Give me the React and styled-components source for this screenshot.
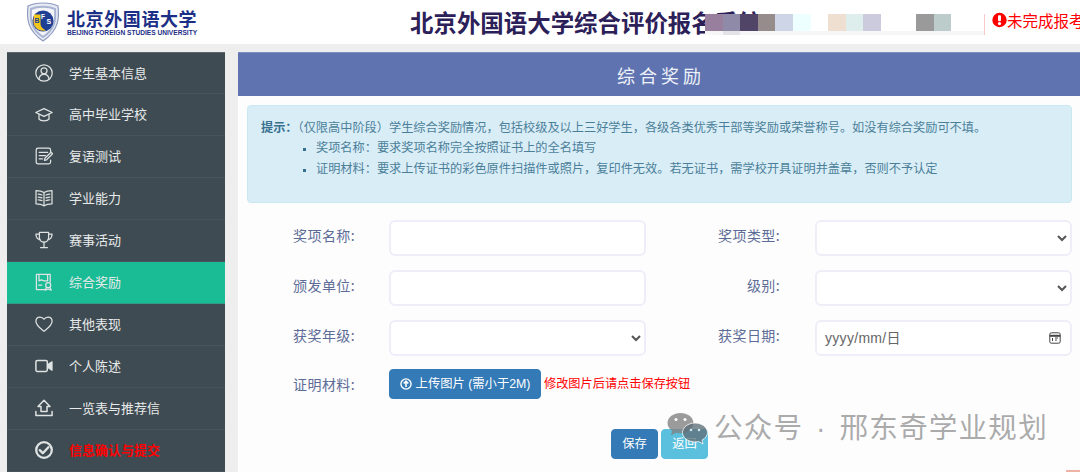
import React from 'react';
import styled, { createGlobalStyle } from 'styled-components';

const Global = createGlobalStyle`
  html, body { margin: 0; padding: 0; background: #eee; }
  body { width: 1080px; height: 472px; overflow: hidden; font-family: "Liberation Sans", "Noto Sans CJK SC", sans-serif; }
  * { box-sizing: border-box; }
`;

const Shell = styled.div`
  width: 1080px; height: 472px; position: relative; overflow: hidden;
  display: flex; flex-direction: column; background: #eee;
`;
const Header = styled.header`
  height: 44px; background: #fff; display: flex; align-items: center; position: relative; flex: none;
`;
const Brand = styled.div`
  width: 410px; padding-left: 26px; display: flex; align-items: center; gap: 7px; flex: none;
`;
const BrandText = styled.div`
  display: flex; flex-direction: column; color: #1c2f86; width: 132px;
`;
const BrandCn = styled.div`
  font: 700 18px/20px "Noto Sans CJK SC", sans-serif; white-space: nowrap; letter-spacing: .6px;
`;
const BrandEn = styled.div`
  font: 700 6.6px/8px "Liberation Sans", sans-serif; white-space: nowrap; margin-top: 1px;
`;
const Title = styled.h1`
  margin: 0; font: 700 23.45px/44px "Noto Sans CJK SC", sans-serif; color: #2c2059; white-space: nowrap;
`;
const Status = styled.div`
  position: absolute; top: 11px; left: 992px; display: flex; align-items: center;
  color: #f00; font: 400 15.5px/18px "Noto Sans CJK SC", sans-serif; white-space: nowrap;
`;
const Mosaic = styled.div`
  position: absolute; left: 705px; top: 14px; width: 280px; height: 21px; background: #f6f6f6;
  border-right: 1px solid #f6c8c8;
`;
const MosaicRow = styled.div`
  display: flex; height: 17px; background: #fff;
`;
const MosaicTail = styled.div`
  margin-left: 17.6px; width: 17.6px; height: 4px; background: #e4e4e8;
`;
const Cell = styled.div`
  width: 17.6px; flex: none; background: ${p => p.$c};
`;
const Page = styled.div`
  flex: 1; display: flex; gap: 13px; padding: 8px 0 0 7px; min-height: 0;
`;
const Sidebar = styled.nav`
  width: 218px; flex: none; background: #3e4b52; border-top: 1px solid #5c666c;
`;
const Item = styled.div`
  height: 42px; display: flex; align-items: center; gap: 16px; padding: 0 0 1px 28px;
  background: ${p => (p.$active ? '#1abc96' : 'transparent')};
  border-bottom: 1px solid ${p => (p.$active ? '#2e9c86' : '#47545b')};
  color: #e8eaea; font: 400 13px/18px "Noto Sans CJK SC", sans-serif;
  &:first-child { height: 41px; }
`;
const ItemLabel = styled.span`
  color: ${p => (p.$alert ? '#f00' : 'inherit')};
  font-weight: ${p => (p.$alert ? 700 : 400)};
`;
const Main = styled.main`
  flex: 1; background: #fdfdfe; display: flex; flex-direction: column; min-width: 0;
`;
const PanelHead = styled.div`
  height: 44px; flex: none; background: #5e73b0; color: #eef1f8; display: flex; align-items: center; justify-content: center;
  font: 400 18px/24px "Noto Sans CJK SC", sans-serif; letter-spacing: 4px; padding-left: 4px; border-top: 1px solid #7a8cc0;
`;
const Notice = styled.section`
  margin: 9px 8px 0 9px; height: 98px; padding: 12px 13px 0; background: #d9edf7; border: 1px solid #c9e9f2; border-radius: 4px;
  color: #4b7f99; font: 400 12.2px/18px "Noto Sans CJK SC", sans-serif;
`;
const NoticeLead = styled.div` white-space: nowrap; `;
const NoticeStrong = styled.b` color: #37708f; `;
const NoticeList = styled.ul`
  margin: 2px 0 0; padding: 0 0 0 55px; list-style: square;
`;
const NoticeItem = styled.li`
  white-space: nowrap; margin-bottom: 3px;
  &::marker { font-size: 9px; color: #37708f; }
`;
const Form = styled.form`
  padding-top: 17px; display: grid; grid-template-columns: 151px 257px 169px 257px; grid-auto-rows: 36px; row-gap: 14px; align-items: center;
`;
const Label = styled.label`
  text-align: right; padding-right: ${p => p.$pad || 34}px; color: #5d6c96; font: 400 14px/20px "Noto Sans CJK SC", sans-serif;
  letter-spacing: .4px; margin-top: -6px; white-space: nowrap;
`;
const Field = styled.input`
  height: 36px; width: 257px; border: 2px solid #eeeef8; border-radius: 6px; background: #fff; outline: none;
`;
const Select = styled.select`
  height: 36px; width: 257px; border: 2px solid #eeeef8; border-radius: 6px; background: #fff; outline: none; color: #555;
`;
const DateField = styled.div`
  height: 36px; width: 257px; border: 2px solid #eeeef8; border-radius: 6px; background: #fff;
  display: flex; align-items: center; justify-content: space-between; padding: 0 9px 0 8px;
  font: 400 14px/20px "Liberation Sans", "Noto Sans CJK SC", sans-serif; letter-spacing: .3px; color: #666;
`;
const UploadCell = styled.div`
  grid-column: 2 / 5; display: flex; align-items: center; gap: 3px; height: 30px; align-self: start; margin-top: -1px;
`;
const UploadLabel = styled(Label)`
  margin-top: -8px;
`;
const Btn = styled.button`
  border: 1px solid ${p => p.$bg}; background: ${p => p.$bg}; color: #fff; border-radius: 4px; padding: 0;
  font: 400 12.3px/18px "Liberation Sans", "Noto Sans CJK SC", sans-serif; height: 30px; width: ${p => p.$w}px;
  display: inline-flex; align-items: center; justify-content: center; gap: 4px; flex: none;
`;
const Hint = styled.span`
  color: #f00; font: 400 12.2px/18px "Noto Sans CJK SC", sans-serif; white-space: nowrap; margin-top: -2px;
`;
const Actions = styled.div`
  display: flex; gap: 3px; padding-left: 373px; margin-top: 23px;
`;
const Mark = styled.div`
  position: absolute; left: 667px; top: 408px; display: flex; align-items: flex-start; gap: 6px;
  color: rgba(140,140,140,.72); font: 400 28.6px/40px "Liberation Sans", "Noto Sans CJK SC", sans-serif;
  letter-spacing: 1.2px; word-spacing: 3.5px; white-space: nowrap;
`;
const MarkIcon = styled.svg`
  width: 41px; height: 35px; margin-top: 3px; flex: none;
`;
const Corner = styled.div`
  position: absolute; right: 0; bottom: 0; width: 14px; height: 2px; background: #efb3a6;
`;
const Glyph = styled.svg`
  width: 18px; height: 18px; flex: none; fill: none; stroke: #dfe3e3; stroke-width: 1.25; stroke-linecap: round; stroke-linejoin: round;
`;

const icons = {
  user: <><circle cx="9" cy="9" r="8.2" /><circle cx="9" cy="6.8" r="3" /><path d="M3.9 15.2C4.4 12 6.6 10.4 9 10.4s4.6 1.6 5.1 4.8" /></>,
  cap: <><path d="M.8 7.5 9 3.6l8.2 3.9L9 11.4z" /><path d="M4 9.2v5c1.6 2.2 8.4 2.2 10 0v-5" /></>,
  note: <><path d="M15.6 5V3a1.8 1.8 0 0 0-1.8-1.8H3A1.8 1.8 0 0 0 1.2 3v12A1.8 1.8 0 0 0 3 16.8h10.8a1.8 1.8 0 0 0 1.8-1.8v-2" /><path d="M4.2 5.4h8.4M4.2 8.6h6.4M4.2 11.8h3.4" /><path d="M9.4 13.4l.5-2.2L16 5.2l1.6 1.6-6 6z" /></>,
  book: <><path d="M9 3.6C7 2.2 3.8 1.6 1 1.6v13.2c2.8 0 6 .6 8 2 2-1.4 5.2-2 8-2V1.6c-2.8 0-6 .6-8 2z" /><path d="M9 3.6v13.2M3.2 5.2c1.2 0 2.6.3 3.8.8M3.2 8c1.2 0 2.6.3 3.8.8M3.2 10.8c1.2 0 2.6.3 3.8.8M14.8 5.2c-1.2 0-2.6.3-3.8.8M14.8 8c-1.2 0-2.6.3-3.8.8M14.8 10.8c-1.2 0-2.6.3-3.8.8" /></>,
  trophy: <><path d="M4.4 1.4h9.2v4.8c0 3-2 5-4.6 5s-4.6-2-4.6-5z" /><path d="M4.4 3H.9c0 3.2 1.2 5 4.2 5.8M13.6 3h3.5c0 3.2-1.2 5-4.2 5.8" /><path d="M9 11.2v5M5.6 16.6h6.8" /></>,
  cert: <><path d="M9.6 16.6H1.4V1.4h13.8v7.6" /><path d="M4 1.6v6.2l2.4-1 2.4 1 3.8.1V1.6M3.6 12h3.2" /><circle cx="13.2" cy="12.2" r="2.5" /><path d="M11.4 14.2l-1.2 3 3-1.2 3 1.2-1.2-3" /></>,
  heart: <path d="M9 16.2C5.4 13.4.9 10.4.9 6.2 .9 3.6 2.8 2 5 2c1.7 0 3.1.8 4 2.3C9.9 2.8 11.3 2 13 2c2.2 0 4.1 1.6 4.1 4.2 0 4.2-4.5 7.2-8.1 10z" />,
  video: <><rect x=".9" y="3.4" width="11.4" height="11" rx="1.4" strokeWidth="1.5" /><path d="M13 7.6l4-2.8v8.4l-4-2.8z" fill="#dfe3e3" /></>,
  upload: <><path d="M9 1.2l6 6.2h-3v5H6v-5H3z" strokeWidth="1.5" /><path d="M.9 12.6v3.8h16.2v-3.8" strokeWidth="1.5" /></>,
  check: <><circle cx="9" cy="9" r="7.8" strokeWidth="2.3" /><path d="M4.8 9.2l3 3 5.6-6" strokeWidth="2.4" /></>,
};

const C = '\uFF1A';
const L = '\uFF08';
const R = '\uFF09';
const K = '\uFF0C';

const nav = [
  ['user', '学生基本信息'], ['cap', '高中毕业学校'], ['note', '复语测试'], ['book', '学业能力'], ['trophy', '赛事活动'],
  ['cert', '综合奖励', true], ['heart', '其他表现'], ['video', '个人陈述'], ['upload', '一览表与推荐信'], ['check', '信息确认与提交', false, true],
];
const cells = ['#977f9d', '#8f8aa8', '#504467', '#968c8c', '#cdd5e6', '#edffff', '#fff', '#eedfd0', '#deeeed', '#cccbde', '#fff', '#fff', '#9a9a9a', '#bccccb'];

const lead = `${L}仅限高中阶段${R}学生综合奖励情况${K}包括校级及以上三好学生${K}各级各类优秀干部等奖励或荣誉称号。如没有综合奖励可不填。`;
const ruleName = `奖项名称${C}要求奖项名称完全按照证书上的全名填写`;
const ruleProof = `证明材料${C}要求上传证书的彩色原件扫描件或照片${K}复印件无效。若无证书${K}需学校开具证明并盖章${K}否则不予认定`;

const Crest = () => (
  <svg width="34" height="40" viewBox="0 0 34 40">
    <path d="M2 4C10 0 24 0 32 4c1.4 12 1 24-15 35C1 28 .6 16 2 4z" fill="#e6eaf4" stroke="#8f9cc0" strokeWidth="1.2" />
    <path d="M5 7c7-3 17-3 24 0 .8 10 .4 20-12 28C4.6 27 4.2 17 5 7z" fill="#f4f5fa" stroke="#a9b4d2" strokeWidth="2" />
    <circle cx="17" cy="19" r="10.5" fill="#1e3f94" />
    <path d="M8 12.5h6.5V22c0 3 2.5 5 5.5 6.5-5.5 1.2-12.5-2-12.5-9z" fill="#f3c61d" />
    <text x="8.6" y="21" fontSize="7" fontWeight="700" fill="#1e3f94" fontFamily="Liberation Sans">B</text>
    <text x="15" y="17" fontSize="6.5" fontWeight="700" fill="#fff" fontFamily="Liberation Sans">F</text>
    <text x="20.5" y="22" fontSize="7" fontWeight="700" fill="#fff" fontFamily="Liberation Sans">S</text>
  </svg>
);

const WeChat = () => (
  <MarkIcon viewBox="0 0 41 35">
    <path d="M13.5 2C6.5 2 .5 6.2.5 12c0 3.4 2 6 4.6 7.900L4 24.200l5-2.500c1.400.4 2.900.6 4.500.6 7 0 13-4.500 13-10.300S20.500 2 13.500 2z" fill="rgba(130,130,130,.8)" />
    <path d="M28 12c-6.900 0-12.500 4.300-12.500 9.500S21.100 31 28 31c1.300 0 2.600-.2 3.800-.5l4.200 2.500-1-3.900c3.300-1.800 5.500-4.500 5.500-7.600C40.500 16.300 34.900 12 28 12z" fill="rgba(95,110,120,.78)" stroke="rgba(255,255,255,.75)" strokeWidth="1" />
    <circle cx="9" cy="8.500" r="1.500" fill="#fff" /><circle cx="18" cy="8.500" r="1.500" fill="#fff" />
    <circle cx="24" cy="19" r="1.300" fill="#cfe6ee" /><circle cx="32" cy="19" r="1.300" fill="#cfe6ee" />
  </MarkIcon>
);

const CalendarIcon = () => (
  <svg width="12" height="12" viewBox="0 0 12 12" fill="none" stroke="#444" strokeWidth="1">
    <rect x=".8" y=".8" width="10.4" height="10.4" rx="1.5" />
    <path d="M.8 3.8h10.4" strokeWidth="2" />
    <path d="M3.5 6v3M6 6h3M6 8h2" />
  </svg>
);

const UploadIcon = () => (
  <svg width="12" height="12" viewBox="0 0 13 13" fill="none" stroke="#fff">
    <circle cx="6.5" cy="6.5" r="5.5" strokeWidth="1.5" />
    <path d="M6.5 9.8V4M4 6l2.5-2.5L9 6" strokeWidth="1.7" />
  </svg>
);

const AlertIcon = () => (
  <svg width="15" height="16" viewBox="0 0 15 16">
    <circle cx="7.5" cy="8" r="7.2" fill="#f00" />
    <rect x="6" y="3.2" width="3" height="6" rx="1" fill="#fff" />
    <circle cx="7.5" cy="11.6" r="1.6" fill="#fff" />
  </svg>
);

export default function App() {
  return (
    <Shell>
      <Global />
      <Header>
        <Brand>
          <Crest />
          <BrandText>
            <BrandCn>北京外国语大学</BrandCn>
            <BrandEn>BEIJING FOREIGN STUDIES UNIVERSITY</BrandEn>
          </BrandText>
        </Brand>
        <Title>北京外国语大学综合评价报名系统</Title>
        <Mosaic>
          <MosaicRow>{cells.map((c, i) => <Cell key={i} $c={c} />)}</MosaicRow>
          <MosaicTail />
        </Mosaic>
        <Status><AlertIcon />未完成报考</Status>
      </Header>
      <Page>
        <Sidebar>
          {nav.map(([icon, text, active, alert]) => (
            <Item key={text} $active={active}>
              <Glyph viewBox="0 0 18 18">{icons[icon]}</Glyph>
              <ItemLabel $alert={alert}>{text}</ItemLabel>
            </Item>
          ))}
        </Sidebar>
        <Main>
          <PanelHead>综合奖励</PanelHead>
          <Notice>
            <NoticeLead><NoticeStrong>{`提示${C}`}</NoticeStrong>{lead}</NoticeLead>
            <NoticeList>
              <NoticeItem>{ruleName}</NoticeItem>
              <NoticeItem>{ruleProof}</NoticeItem>
            </NoticeList>
          </Notice>
          <Form>
            <Label>奖项名称:</Label>
            <Field />
            <Label $pad={35}>奖项类型:</Label>
            <Select><option /></Select>
            <Label>颁发单位:</Label>
            <Field />
            <Label $pad={35}>级别:</Label>
            <Select><option /></Select>
            <Label>获奖年级:</Label>
            <Select><option /></Select>
            <Label $pad={35}>获奖日期:</Label>
            <DateField>yyyy/mm/日<CalendarIcon /></DateField>
            <UploadLabel>证明材料:</UploadLabel>
            <UploadCell>
              <Btn type="button" $w={152} $bg="#337ab7"><UploadIcon />上传图片 (需小于2M)</Btn>
              <Hint>修改图片后请点击保存按钮</Hint>
            </UploadCell>
          </Form>
          <Actions>
            <Btn type="button" $w={47} $bg="#337ab7">保存</Btn>
            <Btn type="button" $w={47} $bg="#5bc0de">返回</Btn>
          </Actions>
        </Main>
      </Page>
      <Mark><WeChat />公众号 · 邢东奇学业规划</Mark>
      <Corner />
    </Shell>
  );
}
